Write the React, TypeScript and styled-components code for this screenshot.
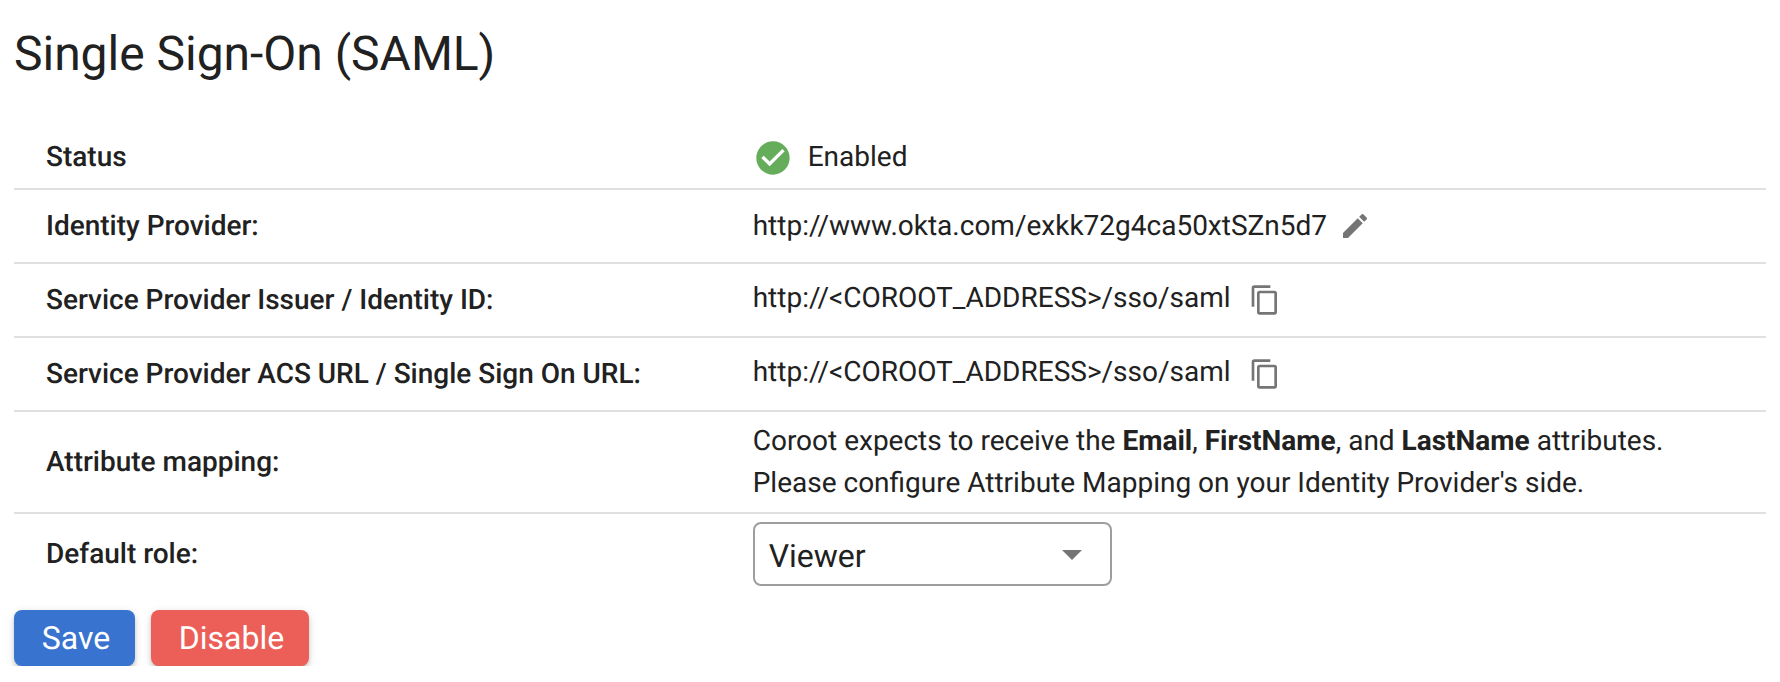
import React from "react";
import styled, { createGlobalStyle } from "styled-components";

const GlobalStyle = createGlobalStyle`
  *, *::before, *::after { box-sizing: border-box; }
  body {
    margin: 0;
    background: #fff;
    color: #212121;
    font-family: Roboto, "Liberation Sans", sans-serif;
    text-rendering: geometricPrecision;
  }
`;

const Page = styled.main`
  padding: 22px 14px 0;
`;

const Title = styled.h1`
  margin: 0;
  font-size: 48px;
  line-height: 64px;
  font-weight: 400;
  letter-spacing: -0.02px;
`;

const Settings = styled.div`
  margin-top: 38px;
`;

const Row = styled.div<{ $height: number; $top?: number; $last?: boolean }>`
  display: grid;
  grid-template-columns: 706.7px 1fr;
  align-items: center;
  height: ${(p) => p.$height}px;
  padding-top: ${(p) => p.$top ?? 0}px;
  border-bottom: ${(p) => (p.$last ? "none" : "2px solid #e0e0e0")};
`;

const Label = styled.div`
  padding-left: 32px;
  font-size: 28px;
  line-height: 42px;
  font-weight: 500;
  letter-spacing: -0.01px;
`;

const Value = styled.div<{ $top?: number }>`
  display: flex;
  align-items: center;
  padding-top: ${(p) => p.$top ?? 0}px;
  padding-left: 32px;
  font-size: 28px;
  line-height: 42px;
`;

const Raised = styled.span`
  padding-bottom: 4px;
`;

const Icon = styled.svg<{ $size: number; $gap?: number; $color: string }>`
  flex: none;
  width: ${(p) => p.$size}px;
  height: ${(p) => p.$size}px;
  margin-left: ${(p) => p.$gap ?? 0}px;
  fill: ${(p) => p.$color};
`;

const StatusText = styled.span`
  margin-left: 15px;
  padding-bottom: 3px;
`;

const Select = styled.button`
  display: flex;
  align-items: center;
  justify-content: space-between;
  width: 359px;
  height: 64px;
  padding: 0 14px;
  border: 2px solid #9e9e9e;
  border-radius: 8px;
  background: #fff;
  color: inherit;
  font: 400 32px/40px Roboto, sans-serif;
  text-rendering: inherit;
`;

const SelectText = styled.span`
  padding-top: 4px;
`;

const Actions = styled.div`
  display: flex;
  gap: 16px;
  margin-top: 16px;
`;

const Button = styled.button<{ $bg: string; $width: number }>`
  width: ${(p) => p.$width}px;
  height: 56px;
  padding: 0 0 0 3px;
  border: 0;
  border-radius: 8px;
  background: ${(p) => p.$bg};
  color: #fff;
  font: 400 32px/56px Roboto, sans-serif;
  text-rendering: inherit;
  box-shadow: 0 6px 2px -4px rgba(0, 0, 0, 0.2), 0 4px 4px 0 rgba(0, 0, 0, 0.14),
    0 2px 10px 0 rgba(0, 0, 0, 0.12);
`;

const COPY =
  "M19,21H8V7H19M19,5H8A2,2 0 0,0 6,7V21A2,2 0 0,0 8,23H19A2,2 0 0,0 21,21V7A2,2 0 0,0 19,5M16,1H4A2,2 0 0,0 2,3V17H4V3H16V1Z";
const PENCIL =
  "M20.71,7.04C21.1,6.65 21.1,6 20.71,5.63L18.37,3.29C18,2.9 17.35,2.9 16.96,3.29L15.12,5.12L18.87,8.87M3,17.25V21H6.75L17.81,9.93L14.06,6.18L3,17.25Z";
const CHECK_CIRCLE =
  "M12 2C6.5 2 2 6.5 2 12S6.5 22 12 22 22 17.5 22 12 17.5 2 12 2M10 17L5 12L6.41 10.59L10 14.17L17.59 6.58L19 8L10 17Z";

function CopyableUrl({ url }: { url: string }) {
  return (
    <Value>
      <Raised>{url}</Raised>
      <Icon viewBox="0 0 24 24" $size={32} $gap={18.2} $color="#757575">
        <path d={COPY} />
      </Icon>
    </Value>
  );
}

export default function App() {
  return (
    <>
      <GlobalStyle />
      <Page>
        <Title>Single Sign-On (SAML)</Title>
        <Settings>
          <Row $height={66} $top={2}>
            <Label>Status</Label>
            <Value $top={2}>
              <Icon viewBox="0 0 24 24" $size={40} $color="#66ad5b">
                <path d={CHECK_CIRCLE} />
              </Icon>
              <StatusText>Enabled</StatusText>
            </Value>
          </Row>
          <Row $height={74}>
            <Label>Identity Provider:</Label>
            <Value>
              http://www.okta.com/exkk72g4ca50xtSZn5d7
              <Icon viewBox="0 0 24 24" $size={32} $gap={12} $color="#757575">
                <path d={PENCIL} />
              </Icon>
            </Value>
          </Row>
          <Row $height={74}>
            <Label>Service Provider Issuer / Identity ID:</Label>
            <CopyableUrl url="http://<COROOT_ADDRESS>/sso/saml" />
          </Row>
          <Row $height={74}>
            <Label>Service Provider ACS URL / Single Sign On URL:</Label>
            <CopyableUrl url="http://<COROOT_ADDRESS>/sso/saml" />
          </Row>
          <Row $height={102}>
            <Label>Attribute mapping:</Label>
            <Value>
              <div>
                Coroot expects to receive the <b>Email</b>, <b>FirstName</b>, and <b>LastName</b> attributes.
                <br />
                Please configure Attribute Mapping on your Identity Provider's side.
              </div>
            </Value>
          </Row>
          <Row $height={80} $last>
            <Label>Default role:</Label>
            <Value>
              <Select type="button">
                <SelectText>Viewer</SelectText>
                <Icon viewBox="0 0 24 24" $size={48} $color="#757575">
                  <path d="M7,10L12,15L17,10H7Z" />
                </Icon>
              </Select>
            </Value>
          </Row>
        </Settings>
        <Actions>
          <Button type="button" $bg="#3874cf" $width={121}>Save</Button>
          <Button type="button" $bg="#ec5f59" $width={158}>Disable</Button>
        </Actions>
      </Page>
    </>
  );
}
